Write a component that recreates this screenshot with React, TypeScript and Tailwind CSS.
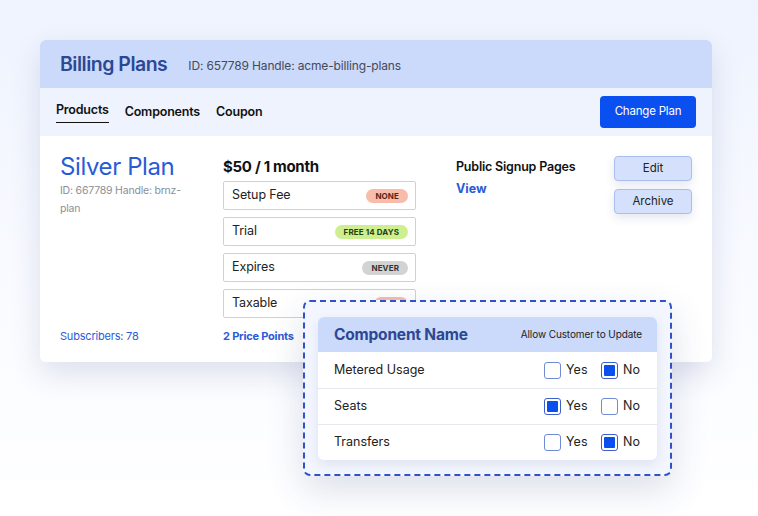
import React from "react";

type Badge = { label: string; tone: "red" | "green" | "gray" | "none" };

const priceRows: { name: string; badge: Badge }[] = [
  { name: "Setup Fee", badge: { label: "NONE", tone: "red" } },
  { name: "Trial", badge: { label: "FREE 14 DAYS", tone: "green" } },
  { name: "Expires", badge: { label: "NEVER", tone: "gray" } },
  { name: "Taxable", badge: { label: "YES", tone: "red" } },
];

const components = [
  { name: "Metered Usage", yes: false },
  { name: "Seats", yes: true },
  { name: "Transfers", yes: false },
];

function Pill({ badge }: { badge: Badge }) {
  const tone =
    badge.tone === "red"
      ? "bg-[#f8bcaa] text-[#5a2418]"
      : badge.tone === "green"
      ? "bg-[#cdef8f] text-[#24400c]"
      : "bg-[#d3d3d3] text-[#333333]";
  return (
    <span
      className={`rounded-full px-[9px] h-[14px] flex items-center text-[8px] font-bold tracking-[0.1px] ${tone}`}
    >
      {badge.label}
    </span>
  );
}

function Check({ on }: { on: boolean }) {
  return (
    <span
      className={`w-[17px] h-[17px] rounded-[3px] border bg-white flex items-center justify-center ${
        on ? "border-[#3d5fc9]" : "border-[#6f8bd3]"
      }`}
    >
      {on && <span className="w-[11px] h-[11px] rounded-[1px] bg-[#0a4ff0]" />}
    </span>
  );
}

export default function App() {
  return (
    <div
      className="relative w-[758px] h-[516px] overflow-hidden bg-gradient-to-b from-[#eef3fe] via-[#f8faff] to-white pt-[40px] pl-[40px] text-[#111]"
      style={{ fontFamily: "Inter, 'Noto Sans', sans-serif" }}
    >
      {/* Main card */}
      <div className="w-[672px] rounded-[6px] overflow-hidden shadow-[0_12px_30px_rgba(40,60,120,0.14)]">
        <div className="h-[48px] bg-[#cbd9fb] flex items-center px-[20px] gap-[21px]">
          <h1 className="text-[19.5px] font-semibold text-[#2c4893] tracking-[-0.5px] pt-[1px]">
            Billing Plans
          </h1>
          <span className="text-[12px] text-[#444a58] pt-[3px] tracking-[-0.15px]">
            ID: 657789 Handle: acme-billing-plans
          </span>
        </div>

        <div className="h-[48px] bg-[#eef3fe] flex items-center pl-[16px] pr-[16px]">
          <div className="flex gap-[16px] text-[12.5px] font-semibold text-[#111] tracking-[-0.2px] pt-[2px]">
            <span className="relative pb-[3px] -mt-[2px] border-b border-[#111]">Products</span>
            <span>Components</span>
            <span>Coupon</span>
          </div>
          <button className="ml-auto w-[96px] h-[32px] rounded-[4px] bg-[#0a4ff0] text-white text-[11.5px] tracking-[-0.2px]">
            Change Plan
          </button>
        </div>

        <div className="h-[226px] bg-white flex pl-[20px] pt-[16px] pb-[18px]">
          <div className="w-[163px] flex flex-col">
            <h2 className="text-[24px] leading-[30px] text-[#2a5bd7] tracking-[-0.4px]">
              Silver Plan
            </h2>
            <p className="text-[10.5px] leading-[18px] text-[#8a8f99] whitespace-nowrap tracking-[-0.2px]">
              ID: 667789 Handle: brnz-
              <br />
              plan
            </p>
            <span className="mt-auto text-[11px] text-[#2a5bd7] tracking-[-0.2px]">Subscribers: 78</span>
          </div>

          <div className="w-[193px] flex flex-col">
            <div className="text-[15px] font-bold leading-[30px] tracking-[-0.3px]">
              $50 / 1 month
            </div>
            <div className="flex flex-col gap-[7px] -mt-[1px]">
              {priceRows.map((r) => (
                <div
                  key={r.name}
                  className="h-[29px] border border-[#cfd1d6] rounded-[2px] flex items-center justify-between pl-[8px] pr-[7px]"
                >
                  <span className="text-[12.5px] text-[#222] tracking-[-0.1px]">{r.name}</span>
                  <Pill badge={r.badge} />
                </div>
              ))}
            </div>
            <span className="mt-auto text-[11px] font-bold text-[#2a5bd7] tracking-[-0.2px]">2 Price Points</span>
          </div>

          <div className="w-[198px] pl-[40px] pt-[6px] flex flex-col gap-[3px]">
            <span className="text-[12.5px] font-semibold whitespace-nowrap tracking-[-0.2px]">Public Signup Pages</span>
            <span className="text-[12.5px] font-bold text-[#2a5bd7]">View</span>
          </div>

          <div className="pt-[4px] flex flex-col gap-[8px]">
            <button className="w-[78px] h-[25px] rounded-[4px] bg-[#d4e0fc] border border-[#aabdf0] text-[11.5px] text-[#222] shadow-[0_4px_10px_rgba(40,60,120,0.12)]">
              Edit
            </button>
            <button className="w-[78px] h-[25px] rounded-[4px] bg-[#d4e0fc] border border-[#aabdf0] text-[11.5px] text-[#222] shadow-[0_4px_10px_rgba(40,60,120,0.12)]">
              Archive
            </button>
          </div>
        </div>
      </div>

      {/* Component overlay */}
      <div className="absolute left-[303px] top-[300px] w-[369px] h-[176px] rounded-[7px] border-[2px] border-dashed border-[#2f52c9] bg-[#f3f6fe] shadow-[0_14px_36px_rgba(40,60,120,0.16)] px-[13px] pt-[15px]">
        <div className="rounded-[6px] overflow-hidden bg-white shadow-[0_4px_12px_rgba(40,60,120,0.1)]">
          <div className="h-[35px] bg-[#cbd9fb] flex items-center justify-between pl-[16px] pr-[15px]">
            <span className="text-[15.5px] font-bold text-[#2c4893] tracking-[-0.2px]">
              Component Name
            </span>
            <span className="text-[10px] text-[#222] tracking-[-0.1px]">Allow Customer to Update</span>
          </div>
          {components.map((c, i) => (
            <div
              key={c.name}
              className={`h-[36px] flex items-center pl-[16px] pr-[17px] ${
                i > 0 ? "border-t border-[#e6e8ee]" : ""
              }`}
            >
              <span className="text-[12.5px] text-[#222]">{c.name}</span>
              <div className="ml-auto flex items-center gap-[5px]">
                <Check on={c.yes} />
                <span className="text-[12.5px] text-[#222] w-[30px]">Yes</span>
                <Check on={!c.yes} />
                <span className="text-[12.5px] text-[#222]">No</span>
              </div>
            </div>
          ))}
        </div>
      </div>
    </div>
  );
}
